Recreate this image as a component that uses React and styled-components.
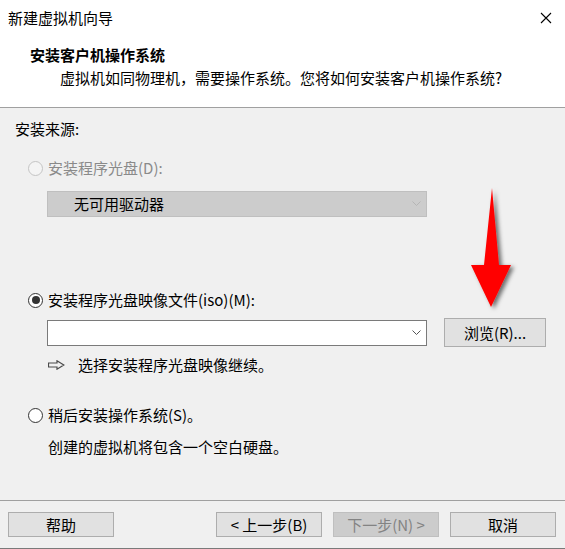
import React from "react";
import styled, { createGlobalStyle } from "styled-components";

const Global = createGlobalStyle`
  html, body { margin: 0; padding: 0; background: #f0f0f0; }
  body { font-family: "Noto Sans CJK SC", "Microsoft YaHei", sans-serif; font-size: 15px; color: #000; }
  * { box-sizing: border-box; }
`;

const Window = styled.div`
  position: relative;
  width: 565px;
  height: 549px;
  display: flex;
  flex-direction: column;
  background: #f0f0f0;
  border-bottom: 1px solid #7a7a7a;
  overflow: hidden;
`;

const Header = styled.div`
  height: 108px;
  background: #fff;
  border-bottom: 1px solid #a0a0a0;
  display: flex;
  flex-direction: column;
`;

const TitleBar = styled.div`
  height: 36px;
  display: flex;
  align-items: center;
  justify-content: space-between;
  padding: 0 13px 0 8px;
  line-height: 20px;
`;

const Close = styled.svg`
  width: 12px;
  height: 12px;
`;

const Heading = styled.div`
  margin-top: 9px;
  padding-left: 30px;
  font-weight: bold;
  line-height: 20px;
`;

const Subtitle = styled.div`
  margin-top: 3px;
  padding-left: 60px;
  line-height: 20px;
`;

const Body = styled.div`
  flex: 1;
  display: flex;
  flex-direction: column;
  padding: 11px 15px 0 15px;
`;

const Line = styled.div`
  line-height: 20px;
  margin-top: ${(p) => p.$mt || 0}px;
  margin-left: ${(p) => p.$ml || 0}px;
  color: ${(p) => (p.$disabled ? "#8a8a8a" : "#000")};
  display: flex;
  align-items: center;
`;

const Radio = styled.span`
  width: 15px;
  height: 15px;
  border-radius: 50%;
  border: 1px solid ${(p) => (p.$disabled ? "#c4c4c4" : "#333")};
  background: ${(p) => (p.$disabled ? "#f4f4f4" : "#fff")};
  margin-left: 13px;
  margin-right: 5px;
  display: inline-flex;
  align-items: center;
  justify-content: center;
  flex: none;
  &::after {
    content: "";
    display: ${(p) => (p.$checked ? "block" : "none")};
    width: 8px;
    height: 8px;
    border-radius: 50%;
    background: #333;
  }
`;

const Combo = styled.div`
  width: 380px;
  height: 26px;
  margin-left: ${(p) => p.$ml || 0}px;
  margin-top: ${(p) => p.$mt || 0}px;
  border: 1px solid ${(p) => (p.$disabled ? "#bfbfbf" : "#7a7a7a")};
  background: ${(p) => (p.$disabled ? "#cccccc" : "#ffffff")};
  display: flex;
  align-items: center;
  justify-content: space-between;
  padding: 0 5px 0 26px;
  line-height: 20px;
  flex: none;
`;

const Chevron = styled.svg`
  width: 9px;
  height: 6px;
`;

const ComboRow = styled.div`
  margin-top: 8px;
  margin-left: 32px;
  height: 29px;
  display: flex;
  align-items: center;
  gap: 17px;
`;

const Button = styled.div`
  width: ${(p) => p.$w || 106}px;
  height: ${(p) => p.$h || 25}px;
  border: 1px solid ${(p) => (p.$disabled ? "#bfbfbf" : "#adadad")};
  background: ${(p) => (p.$disabled ? "#cccccc" : "#e1e1e1")};
  color: ${(p) => (p.$disabled ? "#838383" : "#000")};
  display: flex;
  align-items: center;
  justify-content: center;
  line-height: 20px;
  flex: none;
`;

const Footer = styled.div`
  height: 48px;
  border-top: 1px solid #a0a0a0;
  display: flex;
  padding: 11px 9px 0 8px;
  gap: 11px;
`;

const Spacer = styled.div`
  flex: 1;
`;

const HintArrow = styled.svg`
  width: 17px;
  height: 10px;
  margin-right: 13px;
`;

const RedArrow = styled.svg`
  position: absolute;
  left: 466px;
  top: 184px;
  width: 56px;
  height: 132px;
  overflow: visible;
`;

export default function App() {
  return (
    <>
      <Global />
      <Window>
        <Header>
          <TitleBar>
            <span>新建虚拟机向导</span>
            <Close viewBox="0 0 12 12">
              <path d="M1 1 L11 11 M11 1 L1 11" stroke="#000" strokeWidth="1.1" fill="none" />
            </Close>
          </TitleBar>
          <Heading>安装客户机操作系统</Heading>
          <Subtitle>虚拟机如同物理机，需要操作系统。您将如何安装客户机操作系统?</Subtitle>
        </Header>
        <Body>
          <Line>安装来源:</Line>
          <Line $mt={19} $disabled>
            <Radio $disabled />
            安装程序光盘(D):
          </Line>
          <Combo $disabled $ml={32} $mt={13}>
            <span>无可用驱动器</span>
            <Chevron viewBox="0 0 9 6">
              <path d="M0.5 0.5 L4.5 4.5 L8.5 0.5" stroke="#b5b5b5" fill="none" />
            </Chevron>
          </Combo>
          <Line $mt={73}>
            <Radio $checked />
            安装程序光盘映像文件(iso)(M):
          </Line>
          <ComboRow>
            <Combo>
              <span />
              <Chevron viewBox="0 0 9 6">
                <path d="M0.5 0.5 L4.5 4.5 L8.5 0.5" stroke="#555" fill="none" />
              </Chevron>
            </Combo>
            <Button $w={102} $h={29}>浏览(R)...</Button>
          </ComboRow>
          <Line $mt={8} $ml={33}>
            <HintArrow viewBox="0 0 17 10">
              <path d="M0.5 3 H9 V0.8 L15.8 5 L9 9.2 V7 H0.5 Z" fill="none" stroke="#4a4a4a" strokeWidth="1.2" />
            </HintArrow>
            选择安装程序光盘映像继续。
          </Line>
          <Line $mt={30}>
            <Radio />
            稍后安装操作系统(S)。
          </Line>
          <Line $mt={12} $ml={33}>创建的虚拟机将包含一个空白硬盘。</Line>
        </Body>
        <Footer>
          <Button>帮助</Button>
          <Spacer />
          <Button>&lt; 上一步(B)</Button>
          <Button $disabled>下一步(N) &gt;</Button>
          <Button>取消</Button>
        </Footer>
        <RedArrow viewBox="0 0 56 132">
          <defs>
            <filter id="sh" x="-50%" y="-20%" width="200%" height="150%">
              <feDropShadow dx="3" dy="2" stdDeviation="2" floodColor="#000" floodOpacity="0.55" />
            </filter>
          </defs>
          <path
            d="M26 4 L33 81 L45 81 L25 123 L5 81 L18 81 Z"
            fill="#ff0000"
            filter="url(#sh)"
          />
        </RedArrow>
      </Window>
    </>
  );
}
